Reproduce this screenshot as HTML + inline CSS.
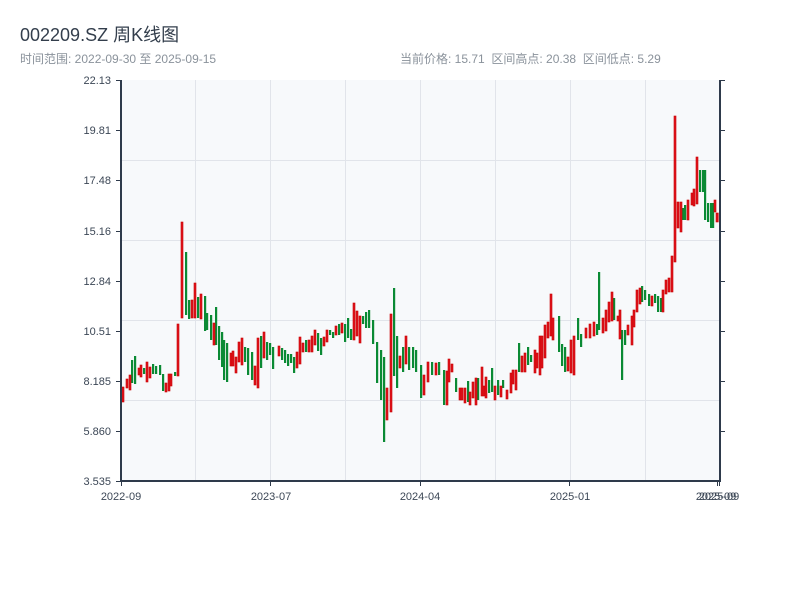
<!DOCTYPE html>
<html><head><meta charset="utf-8"><style>
body{margin:0;background:#fff;width:800px;height:600px;overflow:hidden;font-family:"Liberation Sans","Noto Sans CJK SC",sans-serif}
</style></head><body>
<svg width="800" height="600" xmlns="http://www.w3.org/2000/svg" font-family="Liberation Sans, Noto Sans CJK SC, sans-serif">
<text x="20" y="41" font-size="18" fill="#333e4c">002209.SZ 周K线图</text>
<text x="20" y="63" font-size="12" fill="#8a929b">时间范围: 2022-09-30 至 2025-09-15</text>
<text x="400" y="63" font-size="12" fill="#8a929b" style="white-space:pre" xml:space="preserve">当前价格: 15.71  区间高点: 20.38  区间低点: 5.29</text>
<rect x="121" y="80" width="599" height="401" fill="#f7f9fb"/>
<g stroke="#e1e4ea" stroke-width="1">
<line x1="195.5" y1="80" x2="195.5" y2="481"/><line x1="270.5" y1="80" x2="270.5" y2="481"/><line x1="345.5" y1="80" x2="345.5" y2="481"/><line x1="420.5" y1="80" x2="420.5" y2="481"/><line x1="495.5" y1="80" x2="495.5" y2="481"/><line x1="570.5" y1="80" x2="570.5" y2="481"/><line x1="645.5" y1="80" x2="645.5" y2="481"/>
<line x1="121" y1="160.5" x2="720" y2="160.5"/><line x1="121" y1="240.5" x2="720" y2="240.5"/><line x1="121" y1="320.5" x2="720" y2="320.5"/><line x1="121" y1="400.5" x2="720" y2="400.5"/>
</g>
<g fill="#0a8a34">
<rect x="120" y="387" width="2.2" height="13"/><rect x="131" y="360" width="2.2" height="23"/><rect x="134" y="356" width="2.2" height="28"/><rect x="143" y="368" width="2.2" height="6"/><rect x="152" y="364" width="2.2" height="10"/><rect x="155" y="366" width="2.2" height="8"/><rect x="159" y="365" width="2.2" height="10"/><rect x="162" y="374" width="2.2" height="17"/><rect x="174" y="372" width="2.2" height="4"/>
<rect x="185" y="252" width="2.2" height="63"/><rect x="188" y="300" width="2.2" height="19"/><rect x="197" y="297" width="2.2" height="21"/><rect x="204" y="296" width="2.2" height="35"/><rect x="206" y="313" width="2.2" height="17"/><rect x="210" y="315" width="2.2" height="25"/><rect x="215" y="307" width="2.2" height="38"/><rect x="218" y="326" width="2.2" height="34"/><rect x="221" y="332" width="2.2" height="35"/><rect x="223" y="340" width="2.2" height="40"/><rect x="226" y="343" width="2.2" height="39"/>
<rect x="244" y="347" width="2.2" height="15"/><rect x="247" y="348" width="2.2" height="27"/><rect x="251" y="352" width="2.2" height="28"/><rect x="260" y="336" width="2.2" height="32"/><rect x="266" y="342" width="2.2" height="18"/><rect x="269" y="343" width="2.2" height="12"/><rect x="272" y="347" width="2.2" height="22"/><rect x="281" y="348" width="2.2" height="12"/><rect x="284" y="350" width="2.2" height="13"/><rect x="287" y="354" width="2.2" height="12"/><rect x="290" y="354" width="2.2" height="9"/><rect x="293" y="357" width="2.2" height="16"/>
<rect x="305" y="340" width="2.2" height="12"/><rect x="317" y="333" width="2.2" height="18"/><rect x="320" y="338" width="2.2" height="17"/><rect x="329" y="330" width="2.2" height="5"/><rect x="332" y="332" width="2.2" height="6"/><rect x="338" y="324" width="2.2" height="11"/><rect x="344" y="324" width="2.2" height="18"/><rect x="347" y="318" width="2.2" height="20"/><rect x="350" y="329" width="2.2" height="11"/><rect x="362" y="316" width="2.2" height="8"/><rect x="365" y="312" width="2.2" height="16"/><rect x="368" y="310" width="2.2" height="18"/><rect x="372" y="320" width="2.2" height="24"/><rect x="376" y="342" width="2.2" height="41"/><rect x="380" y="350" width="2.2" height="50"/><rect x="383" y="357" width="2.2" height="85"/><rect x="393" y="288" width="2.2" height="88"/><rect x="396" y="336" width="2.2" height="52"/><rect x="402" y="347" width="2.2" height="25"/>
<rect x="408" y="347" width="2.2" height="23"/><rect x="412" y="347" width="2.2" height="21"/><rect x="415" y="350" width="2.2" height="22"/><rect x="420" y="365" width="2.2" height="33"/><rect x="431" y="362" width="2.2" height="13"/><rect x="438" y="362" width="2.2" height="13"/><rect x="443" y="370" width="2.2" height="35"/><rect x="455" y="378" width="2.2" height="14"/><rect x="467" y="381" width="2.2" height="21"/><rect x="477" y="378" width="2.2" height="22"/><rect x="488" y="380" width="2.2" height="13"/><rect x="491" y="368" width="2.2" height="24"/><rect x="497" y="380" width="2.2" height="15"/><rect x="502" y="380" width="2.2" height="8"/>
<rect x="518" y="343" width="2.2" height="29"/><rect x="527" y="347" width="2.2" height="18"/><rect x="530" y="355" width="2.2" height="7"/><rect x="558" y="316" width="2.2" height="36"/><rect x="561" y="344" width="2.2" height="22"/><rect x="564" y="347" width="2.2" height="25"/><rect x="577" y="318" width="2.2" height="22"/><rect x="580" y="334" width="2.2" height="13"/><rect x="596" y="324" width="2.2" height="11"/><rect x="598" y="272" width="2.2" height="58"/><rect x="613" y="298" width="2.2" height="22"/><rect x="621" y="330" width="2.2" height="50"/><rect x="624" y="330" width="2.2" height="15"/><rect x="641" y="286" width="2.2" height="16"/><rect x="644" y="290" width="2.2" height="10"/><rect x="648" y="294" width="2.2" height="12"/><rect x="654" y="294" width="2.2" height="9"/><rect x="657" y="296" width="2.2" height="16"/><rect x="660" y="298" width="2.2" height="14"/>
<rect x="682" y="208" width="2.2" height="12"/><rect x="684" y="205" width="2.2" height="15"/><rect x="699" y="170" width="2.2" height="22"/><rect x="702" y="170" width="2.2" height="22"/><rect x="704" y="170" width="2.2" height="50"/><rect x="707" y="203" width="2.2" height="19"/><rect x="710" y="203" width="2.2" height="25"/><rect x="712" y="203" width="2.2" height="25"/>
</g>
<g fill="#e0141e" stroke="#c80000" stroke-width="0.6">
<rect x="122" y="387" width="2" height="15"/><rect x="126" y="379" width="2" height="9"/><rect x="129" y="375" width="2" height="15"/><rect x="138" y="368" width="2" height="7"/><rect x="140" y="365" width="2" height="12"/><rect x="146" y="362" width="2" height="20"/><rect x="149" y="367" width="2" height="11"/><rect x="165" y="383" width="2" height="9"/><rect x="168" y="374" width="2" height="17"/><rect x="170" y="374" width="2" height="12"/><rect x="177" y="324" width="2" height="52"/><rect x="181" y="222" width="2" height="96"/><rect x="191" y="300" width="2" height="18"/><rect x="194" y="283" width="2" height="35"/><rect x="200" y="294" width="2" height="25"/><rect x="213" y="323" width="2" height="22"/>
<rect x="230" y="353" width="2" height="13"/><rect x="232" y="351" width="2" height="15"/><rect x="235" y="357" width="2" height="16"/><rect x="238" y="342" width="2" height="20"/><rect x="241" y="338" width="2" height="27"/><rect x="254" y="366" width="2" height="19"/><rect x="257" y="338" width="2" height="50"/><rect x="263" y="332" width="2" height="26"/><rect x="278" y="346" width="2" height="10"/><rect x="296" y="352" width="2" height="16"/><rect x="299" y="337" width="2" height="27"/><rect x="302" y="343" width="2" height="9"/><rect x="308" y="340" width="2" height="12"/><rect x="311" y="336" width="2" height="16"/><rect x="314" y="330" width="2" height="15"/><rect x="323" y="337" width="2" height="9"/><rect x="326" y="330" width="2" height="12"/><rect x="335" y="326" width="2" height="9"/><rect x="341" y="323" width="2" height="10"/><rect x="353" y="303" width="2" height="37"/><rect x="356" y="311" width="2" height="25"/><rect x="359" y="316" width="2" height="27"/><rect x="386" y="388" width="2" height="32"/><rect x="390" y="314" width="2" height="98"/><rect x="399" y="356" width="2" height="12"/><rect x="405" y="336" width="2" height="28"/>
<rect x="423" y="375" width="2" height="20"/><rect x="427" y="362" width="2" height="20"/><rect x="435" y="363" width="2" height="12"/><rect x="446" y="371" width="2" height="34"/><rect x="448" y="359" width="2" height="23"/><rect x="451" y="364" width="2" height="8"/><rect x="459" y="388" width="2" height="12"/><rect x="461" y="388" width="2" height="12"/><rect x="464" y="388" width="2" height="15"/><rect x="469" y="392" width="2" height="13"/><rect x="472" y="382" width="2" height="16"/><rect x="475" y="378" width="2" height="27"/><rect x="481" y="367" width="2" height="29"/><rect x="483" y="386" width="2" height="10"/><rect x="485" y="377" width="2" height="21"/><rect x="494" y="386" width="2" height="14"/><rect x="500" y="386" width="2" height="11"/><rect x="506" y="390" width="2" height="9"/><rect x="510" y="373" width="2" height="20"/><rect x="512" y="370" width="2" height="14"/><rect x="515" y="370" width="2" height="20"/><rect x="521" y="356" width="2" height="16"/><rect x="524" y="353" width="2" height="19"/><rect x="534" y="350" width="2" height="23"/><rect x="536" y="353" width="2" height="15"/><rect x="539" y="336" width="2" height="39"/><rect x="541" y="336" width="2" height="32"/><rect x="544" y="325" width="2" height="33"/><rect x="547" y="322" width="2" height="16"/><rect x="550" y="294" width="2" height="42"/><rect x="552" y="318" width="2" height="22"/>
<rect x="567" y="357" width="2" height="14"/><rect x="570" y="340" width="2" height="33"/><rect x="573" y="336" width="2" height="39"/><rect x="585" y="328" width="2" height="10"/><rect x="589" y="324" width="2" height="14"/><rect x="593" y="322" width="2" height="14"/><rect x="602" y="318" width="2" height="15"/><rect x="605" y="310" width="2" height="21"/><rect x="608" y="302" width="2" height="20"/><rect x="611" y="292" width="2" height="29"/><rect x="617" y="316" width="2" height="5"/><rect x="619" y="310" width="2" height="29"/><rect x="627" y="325" width="2" height="10"/><rect x="631" y="316" width="2" height="29"/><rect x="633" y="310" width="2" height="17"/><rect x="636" y="290" width="2" height="22"/><rect x="639" y="288" width="2" height="16"/><rect x="651" y="296" width="2" height="10"/><rect x="662" y="290" width="2" height="22"/><rect x="665" y="280" width="2" height="14"/><rect x="668" y="278" width="2" height="14"/><rect x="671" y="256" width="2" height="36"/><rect x="674" y="116" width="2" height="146"/><rect x="677" y="202" width="2" height="26"/><rect x="680" y="202" width="2" height="30"/><rect x="687" y="200" width="2" height="20"/><rect x="691" y="193" width="2" height="12"/><rect x="693" y="189" width="2" height="17"/><rect x="696" y="157" width="2" height="47"/><rect x="714" y="200" width="2" height="12"/><rect x="716" y="213" width="2" height="9"/><rect x="719" y="213" width="1.5" height="9"/>
</g>
<g stroke="#2e3a4b" stroke-width="2" fill="none">
<line x1="121" y1="80" x2="121" y2="482"/><line x1="120" y1="481" x2="721" y2="481"/><line x1="720" y1="80" x2="720" y2="482"/>
</g>
<g stroke="#2e3a4b" stroke-width="1">
<line x1="116" y1="80.5" x2="121" y2="80.5"/><line x1="116" y1="130.5" x2="121" y2="130.5"/><line x1="116" y1="180.5" x2="121" y2="180.5"/><line x1="116" y1="231.5" x2="121" y2="231.5"/><line x1="116" y1="281.5" x2="121" y2="281.5"/><line x1="116" y1="331.5" x2="121" y2="331.5"/><line x1="116" y1="381.5" x2="121" y2="381.5"/><line x1="116" y1="431.5" x2="121" y2="431.5"/><line x1="116" y1="481.5" x2="121" y2="481.5"/>
<line x1="720" y1="80.5" x2="725" y2="80.5"/><line x1="720" y1="130.5" x2="725" y2="130.5"/><line x1="720" y1="180.5" x2="725" y2="180.5"/><line x1="720" y1="231.5" x2="725" y2="231.5"/><line x1="720" y1="281.5" x2="725" y2="281.5"/><line x1="720" y1="331.5" x2="725" y2="331.5"/><line x1="720" y1="381.5" x2="725" y2="381.5"/><line x1="720" y1="431.5" x2="725" y2="431.5"/>
<line x1="121.5" y1="481" x2="121.5" y2="486"/><line x1="270.5" y1="481" x2="270.5" y2="486"/><line x1="420.5" y1="481" x2="420.5" y2="486"/><line x1="569.5" y1="481" x2="569.5" y2="486"/><line x1="717.5" y1="481" x2="717.5" y2="486"/><line x1="719.5" y1="481" x2="719.5" y2="486"/>
</g>
<g font-size="11" fill="#3c4756" text-anchor="end">
<text x="111" y="84">22.13</text><text x="111" y="134">19.81</text><text x="111" y="184">17.48</text><text x="111" y="235">15.16</text><text x="111" y="285">12.84</text><text x="111" y="335">10.51</text><text x="111" y="385">8.185</text><text x="111" y="435">5.860</text><text x="111" y="485">3.535</text>
</g>
<g font-size="11" fill="#3c4756" text-anchor="middle">
<text x="121" y="500">2022-09</text><text x="271" y="500">2023-07</text><text x="420" y="500">2024-04</text><text x="570" y="500">2025-01</text><text x="716" y="500">2025-09</text><text x="719" y="500">2025-09</text>
</g>
</svg>
</body></html>
